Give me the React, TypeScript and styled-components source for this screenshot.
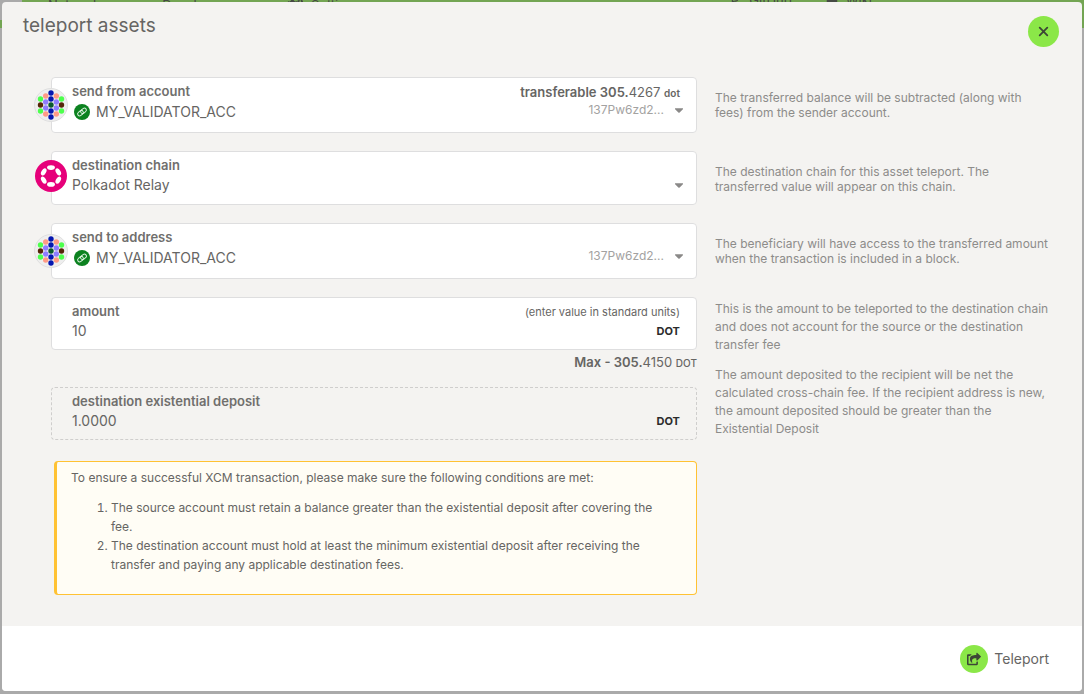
import React from "react";
import styled, { createGlobalStyle, css } from "styled-components";
import { FaBook, FaCaretDown, FaCodeBranch, FaCogs, FaShareSquare } from "react-icons/fa";

const GlobalStyle = createGlobalStyle`
  *, *::before, *::after { box-sizing: border-box; }
  body {
    margin: 0;
    background: #aaaaaa;
    color: #666563;
    font-family: Inter, "Liberation Sans", sans-serif;
    font-size: 14px;
    line-height: 20px;
  }
  button, input, select { font: inherit; color: inherit; }
`;

const Shell = styled.div`
  position: relative;
  min-height: 100vh;
  padding: 2px 2px 3px;
  display: flex;
`;

const TopBar = styled.nav`
  position: absolute;
  inset: 0 0 auto;
  height: 28px;
  overflow: hidden;
  display: flex;
  align-items: flex-start;
  justify-content: space-between;
  background: #73a553;
  color: #454944;
  font-size: 13px;
  padding: 0 212px 0 0;
`;

const Brand = styled.span`
  width: 22px;
  height: 20px;
  background: #aaaaaa;
`;

const NavGroup = styled.div<{ $gap: number }>`
  display: flex;
  gap: ${({ $gap }) => $gap}px;
  padding-left: 26px;
  margin-top: -10px;
`;

const NavLink = styled.a<{ $gap: number }>`
  display: flex;
  align-items: center;
  gap: ${({ $gap }) => $gap}px;
  color: inherit;
  text-decoration: none;
`;

const NavLeft = styled.div`
  display: flex;
`;

const Dialog = styled.main`
  position: relative;
  flex: 1;
  display: flex;
  flex-direction: column;
  border-radius: 4px;
  overflow: hidden;
  background: #f4f3f1;
`;

const Header = styled.header`
  display: flex;
  align-items: flex-start;
  justify-content: space-between;
  padding: 12px 23px 0 21px;
`;

const Title = styled.h1`
  margin: 0;
  font-size: 19px;
  line-height: 24px;
  font-weight: 400;
`;

const CloseButton = styled.button`
  display: grid;
  place-items: center;
  width: 31px;
  height: 31px;
  margin-top: 2px;
  padding: 0;
  border: 0;
  border-radius: 50%;
  background: #8be748;
  color: #3c4636;
`;

const Body = styled.form`
  flex: 1;
  display: flex;
  flex-direction: column;
  gap: 18px;
  padding: 30px 21px 31px;
`;

const Row = styled.section`
  display: grid;
  grid-template-columns: 37fr 19fr;
  column-gap: 18px;
`;

const Inputs = styled.div`
  min-width: 0;
  padding-left: 28px;
`;

const Hint = styled.div<{ $loose?: boolean }>`
  padding: ${({ $loose }) => ($loose ? 3 : 13)}px 11px 0 0;
  font-size: 12px;
  line-height: ${({ $loose }) => ($loose ? 18 : 15)}px;
  color: #8d8c8a;
  p { margin: 0 0 12px; }
  p:last-child { margin: 0; }
`;

const Field = styled.div<{ $dashed?: boolean; $compact?: boolean }>`
  position: relative;
  padding: 5px 16px ${({ $compact }) => ($compact ? 8 : 9)}px 20px;
  border: 1px solid #dededf;
  border-radius: 4px;
  background: #ffffff;
  ${({ $dashed }) =>
    $dashed &&
    css`
      border: 1px dashed #cfcecd;
      background: transparent;
    `}
`;

const FieldHead = styled.div`
  display: flex;
  justify-content: space-between;
  height: 16px;
  margin-bottom: 2px;
  line-height: 16px;
`;

const Label = styled.label`
  font-size: 13px;
  font-weight: 600;
  color: #706f6d;
`;

const HeadNote = styled.span`
  padding-top: 1px;
  font-size: 11px;
`;

const Balance = styled.span`
  padding-top: 1px;
  font-size: 13px;
  b { font-weight: 600; }
  small { font-size: 10px; font-weight: 600; }
`;

const ValueRow = styled.div<{ $tall?: boolean }>`
  display: flex;
  align-items: center;
  height: ${({ $tall }) => ($tall ? 22 : 20)}px;
`;

const Select = styled.select`
  appearance: none;
  flex: 1;
  min-width: 0;
  padding: 0;
  border: 0;
  background: transparent;
`;

const TextInput = styled.input`
  flex: 1;
  min-width: 0;
  height: 20px;
  padding: 0;
  border: 0;
  background: transparent;
`;

const AddressEnd = styled.span`
  display: flex;
  align-items: center;
  gap: 8px;
  margin-bottom: 4px;
  font-size: 12px;
  color: #a3a2a1;
`;

const Caret = styled(FaCaretDown)`
  width: 14px;
  height: 14px;
  margin-right: -6px;
  color: #8a8988;
`;

const Unit = styled.span`
  font-size: 11px;
  font-weight: 700;
  color: #2b2b2b;
`;

const MaxLine = styled.div`
  margin: 3px 0 15px;
  font-size: 13px;
  line-height: 18px;
  text-align: right;
  b { font-weight: 600; }
  small { font-size: 10px; font-weight: 500; }
`;

const Avatar = styled.svg<{ $size: number; $top: number }>`
  position: absolute;
  left: -1px;
  top: ${({ $top }) => $top}px;
  width: ${({ $size }) => $size}px;
  height: ${({ $size }) => $size}px;
  transform: translateX(-50%);
`;

const Badge = styled.svg`
  width: 16px;
  height: 16px;
  margin: 0 6px 0 2px;
`;

const Notice = styled.div`
  margin: 3px 0 0 3px;
  padding: 6px 16px 20px 14px;
  border: 1px solid #ffc233;
  border-left-width: 3px;
  border-radius: 4px;
  background: #fffdf5;
  font-size: 12px;
  line-height: 19px;
  p { margin: 0 0 11px; }
  ol { margin: 0; padding: 0 12px 0 40px; }
`;

const Footer = styled.footer`
  display: flex;
  justify-content: flex-end;
  padding: 19px 33px 18px;
  background: #ffffff;
`;

const TeleportButton = styled.button`
  display: flex;
  align-items: center;
  gap: 6px;
  padding: 0;
  border: 0;
  background: transparent;
`;

const Disc = styled.span`
  display: grid;
  place-items: center;
  width: 28px;
  height: 28px;
  border-radius: 50%;
  background: #8be748;
  color: #3c4636;
`;

const BLUE = "#0517b0";
const PINK = "#ff9b86";
const GREEN = "#4dff4d";
const LILAC = "#8f7dff";
const BROWN = "#552508";
const PINE = "#0b5a2f";

const columns: { x: number; ys: number[]; fills: string[] }[] = [
  { x: 6.5, ys: [11, 17, 23], fills: [GREEN, BROWN, GREEN] },
  { x: 11.7, ys: [8, 14, 20, 26], fills: [PINK, LILAC, LILAC, PINK] },
  { x: 17, ys: [5, 11, 17, 23, 29], fills: [BLUE, BLUE, PINE, BLUE, BLUE] },
  { x: 22.3, ys: [8, 14, 20, 26], fills: [PINK, LILAC, LILAC, PINK] },
  { x: 27.5, ys: [11, 17, 23], fills: [GREEN, BROWN, GREEN] },
];

function Identicon() {
  return (
    <Avatar $size={34} $top={10} viewBox="0 0 34 34" aria-hidden="true">
      <circle cx="17" cy="17" r="16.5" fill="#eeeeee" stroke="#dfdfdf" />
      {columns.map((c) =>
        c.ys.map((y, i) => (
          <circle key={`${c.x}-${y}`} cx={c.x} cy={y} r="2.7" fill={c.fills[i]} />
        ))
      )}
    </Avatar>
  );
}

function PolkadotLogo() {
  return (
    <Avatar $size={32} $top={8} viewBox="0 0 32 32" aria-hidden="true">
      <circle cx="16" cy="16" r="16" fill="#e6007a" />
      {[0, 60, 120, 180, 240, 300].map((a) => (
        <ellipse key={a} cx="16" cy="7.6" rx="3.9" ry="2.3" fill="#ffffff" transform={`rotate(${a} 16 16)`} />
      ))}
    </Avatar>
  );
}

function LinkBadge() {
  return (
    <Badge viewBox="0 0 16 16" aria-hidden="true">
      <circle cx="8" cy="8" r="8" fill="#0c8220" />
      <g fill="none" stroke="#d9f0dc" strokeWidth="1" transform="rotate(-38 8 8)">
        <rect x="3" y="6" width="6.200" height="4" rx="2" />
        <rect x="6.800" y="6" width="6.200" height="4" rx="2" />
      </g>
    </Badge>
  );
}

function AccountField({ id, label, balance }: { id: string; label: string; balance?: React.ReactNode }) {
  return (
    <Field>
      <Identicon />
      <FieldHead>
        <Label htmlFor={id}>{label}</Label>
        {balance}
      </FieldHead>
      <ValueRow $tall>
        <LinkBadge />
        <Select id={id}>
          <option>MY_VALIDATOR_ACC</option>
        </Select>
        <AddressEnd>
          137Pw6zd2...
          <Caret />
        </AddressEnd>
      </ValueRow>
    </Field>
  );
}

export default function App() {
  return (
    <>
      <GlobalStyle />
      <Shell>
        <TopBar>
          <NavLeft>
            <Brand />
            <NavGroup $gap={40}>
              <NavLink href="#network" $gap={10}>Network <FaCaretDown size={12} /></NavLink>
              <NavLink href="#developer" $gap={10}>Developer <FaCaretDown size={12} /></NavLink>
              <NavLink href="#settings" $gap={8}><FaCogs size={16} /> Settings</NavLink>
            </NavGroup>
          </NavLeft>
          <NavGroup $gap={34}>
            <NavLink href="#github" $gap={8}><FaCodeBranch size={12} /> GitHub</NavLink>
            <NavLink href="#wiki" $gap={8}><FaBook size={12} /> Wiki</NavLink>
          </NavGroup>
        </TopBar>
        <Dialog>
          <Header>
            <Title>teleport assets</Title>
            <CloseButton type="button" aria-label="Close">
              <svg width="11" height="11" viewBox="0 0 11 11" aria-hidden="true">
                <path d="M1.700 1.700l7.600 7.600M9.300 1.700l-7.600 7.600" stroke="currentColor" strokeWidth="1.8" strokeLinecap="round" />
              </svg>
            </CloseButton>
          </Header>
          <Body>
            <Row>
              <Inputs>
                <AccountField
                  id="from"
                  label="send from account"
                  balance={
                    <Balance>
                      <b>transferable 305.</b>4267 <small>dot</small>
                    </Balance>
                  }
                />
              </Inputs>
              <Hint>
                <p>The transferred balance will be subtracted (along with fees) from the sender account.</p>
              </Hint>
            </Row>
            <Row>
              <Inputs>
                <Field>
                  <PolkadotLogo />
                  <FieldHead>
                    <Label htmlFor="chain">destination chain</Label>
                  </FieldHead>
                  <ValueRow>
                    <Select id="chain">
                      <option>Polkadot Relay</option>
                    </Select>
                    <Caret />
                  </ValueRow>
                </Field>
              </Inputs>
              <Hint>
                <p>The destination chain for this asset teleport. The transferred value will appear on this chain.</p>
              </Hint>
            </Row>
            <Row>
              <Inputs>
                <AccountField id="to" label="send to address" />
              </Inputs>
              <Hint>
                <p>The beneficiary will have access to the transferred amount when the transaction is included in a block.</p>
              </Hint>
            </Row>
            <Row>
              <Inputs>
                <Field $compact>
                  <FieldHead>
                    <Label htmlFor="amount">amount</Label>
                    <HeadNote>(enter value in standard units)</HeadNote>
                  </FieldHead>
                  <ValueRow>
                    <TextInput id="amount" defaultValue="10" />
                    <Unit>DOT</Unit>
                  </ValueRow>
                </Field>
                <MaxLine>
                  <b>Max - 305.</b>4150 <small>DOT</small>
                </MaxLine>
                <Field $dashed $compact>
                  <FieldHead>
                    <Label htmlFor="deposit">destination existential deposit</Label>
                  </FieldHead>
                  <ValueRow>
                    <TextInput id="deposit" value="1.0000" readOnly />
                    <Unit>DOT</Unit>
                  </ValueRow>
                </Field>
              </Inputs>
              <Hint $loose>
                <p>This is the amount to be teleported to the destination chain and does not account for the source or the destination transfer fee</p>
                <p>The amount deposited to the recipient will be net the calculated cross-chain fee. If the recipient address is new, the amount deposited should be greater than the Existential Deposit</p>
              </Hint>
            </Row>
            <Row>
              <Inputs>
                <Notice>
                  <p>To ensure a successful XCM transaction, please make sure the following conditions are met:</p>
                  <ol>
                    <li>The source account must retain a balance greater than the existential deposit after covering the fee.</li>
                    <li>The destination account must hold at least the minimum existential deposit after receiving the transfer and paying any applicable destination fees.</li>
                  </ol>
                </Notice>
              </Inputs>
            </Row>
          </Body>
          <Footer>
            <TeleportButton type="button">
              <Disc>
                <FaShareSquare size={14} />
              </Disc>
              Teleport
            </TeleportButton>
          </Footer>
        </Dialog>
      </Shell>
    </>
  );
}
